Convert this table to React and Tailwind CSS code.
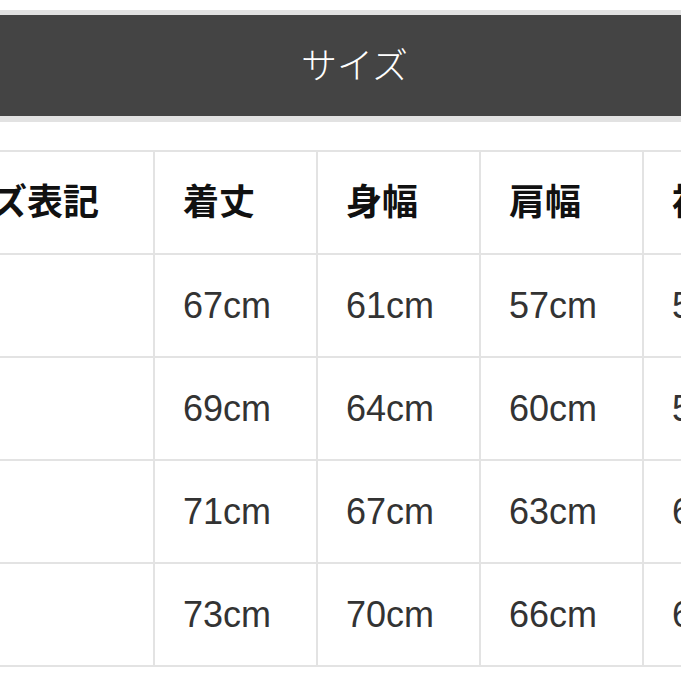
const headers = ["サイズ表記", "着丈", "身幅", "肩幅", "袖丈"];

const rows = [
  ["", "67cm", "61cm", "57cm", "58cm"],
  ["", "69cm", "64cm", "60cm", "59cm"],
  ["", "71cm", "67cm", "63cm", "60cm"],
  ["", "73cm", "70cm", "66cm", "61cm"],
];

const jp = { fontFamily: '"Noto Sans CJK JP", "Noto Sans", sans-serif' };
const num = { fontFamily: '"Liberation Sans", Arial, sans-serif' };

function Row({ cells, head }) {
  return (
    <div className="flex h-[103px] border-b-2 border-[#e3e3e3]">
      {cells.map((c, i) => (
        <div
          key={i}
          className={`flex shrink-0 items-center border-r-2 border-[#e3e3e3] pl-[28px] ${
            i === 0 ? "w-[263px]" : "w-[163px]"
          } ${head ? "pb-[8px] text-[36px] font-bold text-[#111]" : "text-[36px] text-[#333]"}`}
          style={head ? jp : num}
        >
          {c}
        </div>
      ))}
    </div>
  );
}

export default function App() {
  return (
    <div className="h-[681px] w-[681px] overflow-hidden bg-white">
      <div className="pt-[10px]">
        <div className="flex h-[112px] items-center justify-center border-t-[5px] border-b-[6px] border-[#e2e2e2] bg-[#444444] pl-[28px]">
          <span className="-mt-[6px] text-[36px] font-light text-white" style={jp}>
            サイズ
          </span>
        </div>
      </div>
      <div className="mt-[28px] ml-[-108px] w-[1000px] border-t-2 border-[#e3e3e3]">
        <Row cells={headers} head />
        {rows.map((r, i) => (
          <Row key={i} cells={r} />
        ))}
      </div>
    </div>
  );
}
